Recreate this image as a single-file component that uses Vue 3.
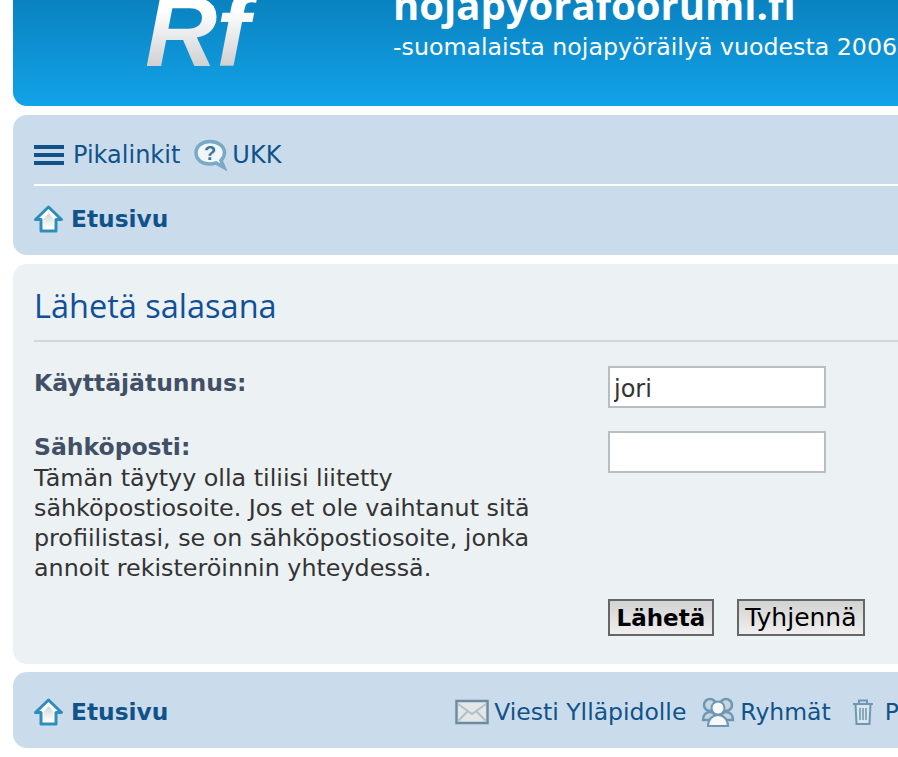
<template>
  <div class="page">
    <header class="headerbar">
      <div class="logo"><span class="logo-text">Rf</span></div>
      <div class="site-desc">
        <h1>nojapyorafoorumi.fi</h1>
        <p>-suomalaista nojapyöräilyä vuodesta 2006</p>
      </div>
    </header>

    <nav class="navbar">
      <ul class="nav-main">
        <li class="quick">
          <span class="burger"><i></i><i></i><i></i></span>
          <a href="#">Pikalinkit</a>
        </li>
        <li>
          <svg class="icon icon-faq" width="34" height="32" viewBox="0 0 34 32">
            <path d="M16 2.500c8 0 14.500 4.500 14.500 11 0 3.500-1.500 6-3.500 8l3 7-8-4.500c-2 .6-4 1-6 1C7.500 25 2 20.500 2 13.500 2 7 8 2.500 16 2.500z" fill="#f0f6fa" stroke="#7aa9c6" stroke-width="3.500"/>
            <text x="16" y="21" text-anchor="middle" class="q-mark">?</text>
          </svg>
          <a href="#">UKK</a>
        </li>
      </ul>
      <div class="crumbs">
        <svg class="icon" width="29" height="28" viewBox="0 0 29 28">
          <defs>
            <linearGradient id="house" x1="0" y1="0" x2="0" y2="1">
              <stop offset="0" stop-color="#cfd3d6" />
              <stop offset="1" stop-color="#ffffff" />
            </linearGradient>
          </defs>
          <path d="M14.500 2 27.500 14.500h-5.500V26H7V14.500H1.500z" fill="#fff" stroke="#2f8db9" stroke-width="3" stroke-linejoin="round"/>
          <path d="M14.500 8 19.500 14v9.500h-10V14z" fill="url(#house)"/>
        </svg>
        <a href="#">Etusivu</a>
      </div>
    </nav>

    <main class="panel">
      <h2>Lähetä salasana</h2>
      <form class="form" @submit.prevent>
        <div class="field field-user">
          <label for="username">Käyttäjätunnus:</label>
          <input id="username" v-model="username" type="text" />
        </div>
        <div class="field field-mail">
          <div class="field-text">
            <label for="email">Sähköposti:</label>
            <p>Tämän täytyy olla tiliisi liitetty sähköpostiosoite. Jos et ole vaihtanut sitä profiilistasi, se on sähköpostiosoite, jonka annoit rekisteröinnin yhteydessä.</p>
          </div>
          <input id="email" v-model="email" type="text" />
        </div>
        <div class="actions">
          <button type="submit" class="btn btn-main">Lähetä</button>
          <button type="button" class="btn" @click="email = ''">Tyhjennä</button>
        </div>
      </form>
    </main>

    <footer class="navbar footer">
      <div class="crumbs crumbs-foot">
        <svg class="icon" width="29" height="28" viewBox="0 0 29 28">
          <path d="M14.500 2 27.500 14.500h-5.500V26H7V14.500H1.500z" fill="#fff" stroke="#2f8db9" stroke-width="3" stroke-linejoin="round"/>
          <path d="M14.500 8 19.500 14v9.500h-10V14z" fill="url(#house)"/>
        </svg>
        <a href="#">Etusivu</a>
      </div>
      <ul class="foot-links">
        <li>
          <svg class="icon" width="34" height="26" viewBox="0 0 34 26">
            <rect x="1.500" y="2" width="31" height="22" fill="#e3e7e8" stroke="#6b8da3" stroke-width="2.500"/>
            <path d="M3 5 17 15 31 5M3 22l10-10M31 22 21 12" fill="none" stroke="#b4c0c8" stroke-width="2"/>
          </svg>
          <a href="#">Viesti Ylläpidolle</a>
        </li>
        <li>
          <svg class="icon" width="34" height="32" viewBox="0 0 34 32">
            <circle cx="9" cy="9" r="6" fill="#c5d6e2" stroke="#6d97b3" stroke-width="2.500"/>
            <circle cx="25" cy="9" r="6" fill="#c5d6e2" stroke="#6d97b3" stroke-width="2.500"/>
            <path d="M2 24c0-5 3-8 7-8s6 3 6 8zM19 24c0-5 3-8 6-8 4 0 7 3 7 8z" fill="#c5d6e2" stroke="#6d97b3" stroke-width="2.500"/>
            <circle cx="17" cy="12" r="6.500" fill="#f6f8fa" stroke="#6d97b3" stroke-width="2"/>
            <path d="M7 30c0-6 4-11 10-11s10 5 10 11z" fill="#f6f8fa" stroke="#6d97b3" stroke-width="2"/>
          </svg>
          <a href="#">Ryhmät</a>
        </li>
        <li class="trash">
          <svg class="icon" width="24" height="28" viewBox="0 0 24 28">
            <path d="M2 6h20M8 6V2.500h8V6" fill="none" stroke="#6d97b3" stroke-width="2"/>
            <path d="M4.500 6h15l-1 20h-13z" fill="#dbe5ec" stroke="#6d97b3" stroke-width="2"/>
            <path d="M9 10v12M12 10v12M15 10v12" stroke="#6d97b3" stroke-width="1.500"/>
          </svg>
          <a href="#">Poista evästeet</a>
        </li>
      </ul>
    </footer>
  </div>
</template>

<script setup>
import { ref } from 'vue'

const username = ref('jori')
const email = ref('')
</script>

<style>
html, body {
  margin: 0;
  background: #fff;
  overflow: hidden;
  height: 100%;
}
</style>

<style scoped>
.page {
  width: 1200px;
  padding: 0 0 0 13px;
  display: flex;
  flex-direction: column;
  gap: 9px;
  font-family: "DejaVu Sans", Verdana, sans-serif;
  color: #333;
}

a {
  color: #105289;
  text-decoration: none;
}

ul {
  list-style: none;
  margin: 0;
  padding: 0;
}

.icon {
  flex: none;
}

.headerbar {
  height: 106px;
  display: flex;
  background: linear-gradient(to bottom, #0a82c0 0%, #12a3e8 100%);
  border-radius: 0 0 14px 14px;
  overflow: hidden;
  color: #fff;
}

.logo {
  width: 380px;
  flex: none;
  padding-left: 132px;
  box-sizing: border-box;
}

.logo-text {
  display: block;
  margin-top: -19px;
  font-family: "Liberation Sans", sans-serif;
  font-style: italic;
  font-weight: 700;
  font-size: 100px;
  line-height: 100px;
  letter-spacing: -1px;
  background: linear-gradient(to bottom, #fff 30%, #cfd0d2 85%);
  -webkit-background-clip: text;
  background-clip: text;
  color: transparent;
}

.site-desc h1 {
  margin: -18px 0 0;
  font-family: "Open Sans", sans-serif;
  font-size: 40px;
  line-height: 46px;
  font-weight: 700;
}

.site-desc p {
  margin: 5px 0 0;
  font-size: 23.7px;
  line-height: 28px;
}

.navbar {
  background: #cadceb;
  border-radius: 14px 0 0 14px;
  padding: 24px 0 20px 21px;
  font-size: 24px;
  line-height: 32px;
}

.nav-main {
  display: flex;
  gap: 14px;
  padding-bottom: 13px;
  border-bottom: 2px solid #fff;
}

.nav-main li,
.foot-links li {
  display: flex;
  align-items: center;
}

.burger {
  display: flex;
  flex-direction: column;
  gap: 4px;
  width: 30px;
  margin-right: 9px;
}

.burger i {
  display: block;
  height: 4px;
  background: #105289;
}

.icon-faq {
  margin-right: 4px;
}

.q-mark {
  font-family: "Liberation Sans", sans-serif;
  font-weight: 700;
  font-size: 20px;
  fill: #3d76a0;
}

.crumbs {
  display: flex;
  align-items: center;
  gap: 8px;
  margin-top: 17px;
  font-size: 23.3px;
  font-weight: 700;
}

.panel {
  background: #ecf1f3;
  border-radius: 14px 0 0 14px;
  padding: 0 0 0 21px;
  height: 400px;
  box-sizing: border-box;
}

.panel h2 {
  margin: 0;
  padding: 23px 0 15px;
  font-family: "Open Sans", sans-serif;
  font-size: 32.5px;
  line-height: 38px;
  font-weight: 400;
  color: #115098;
  border-bottom: 2px solid #cfd6dc;
}

.form {
  font-size: 23.8px;
  line-height: 30px;
}

.field {
  display: flex;
}

.field-user {
  margin-top: 24px;
}

.field-mail {
  margin-top: 23px;
}

.field label {
  display: block;
  width: 574px;
  font-size: 23.5px;
  font-weight: 700;
  color: #425067;
  flex: none;
}

.field-user label {
  padding-top: 2px;
}

.field-text {
  width: 574px;
  flex: none;
  padding-top: 1px;
}

.field-text p {
  margin: 1px 0 0;
  width: 510px;
}

input {
  width: 218px;
  height: 42px;
  box-sizing: border-box;
  border: 2px solid #b8bdc2;
  background: #fff;
  padding: 3px 4px 0;
  font: inherit;
  font-size: 24px;
  color: #333;
  outline: none;
}

.actions {
  display: flex;
  gap: 23px;
  padding-left: 574px;
  margin-top: 16px;
}

.btn {
  height: 37px;
  box-sizing: border-box;
  border: 2px solid #666;
  padding: 0 6.5px;
  background: linear-gradient(to bottom, #d2d2d2, #efefef);
  font: inherit;
  font-size: 25px;
  line-height: 30px;
  color: #000;
}

.btn-main {
  font-size: 23px;
  font-weight: 700;
}

.footer {
  display: flex;
  align-items: center;
  margin-top: -1px;
  padding: 4px 0 0 21px;
  height: 76px;
  box-sizing: border-box;
  font-size: 23.5px;
}

.crumbs-foot {
  margin: 0;
}

.foot-links {
  display: flex;
  gap: 15px;
  margin-left: 287px;
  white-space: nowrap;
}

.foot-links .icon {
  margin-right: 5px;
}

.foot-links .trash {
  margin-left: 5px;
}

.foot-links .trash .icon {
  margin-right: 10px;
}
</style>
